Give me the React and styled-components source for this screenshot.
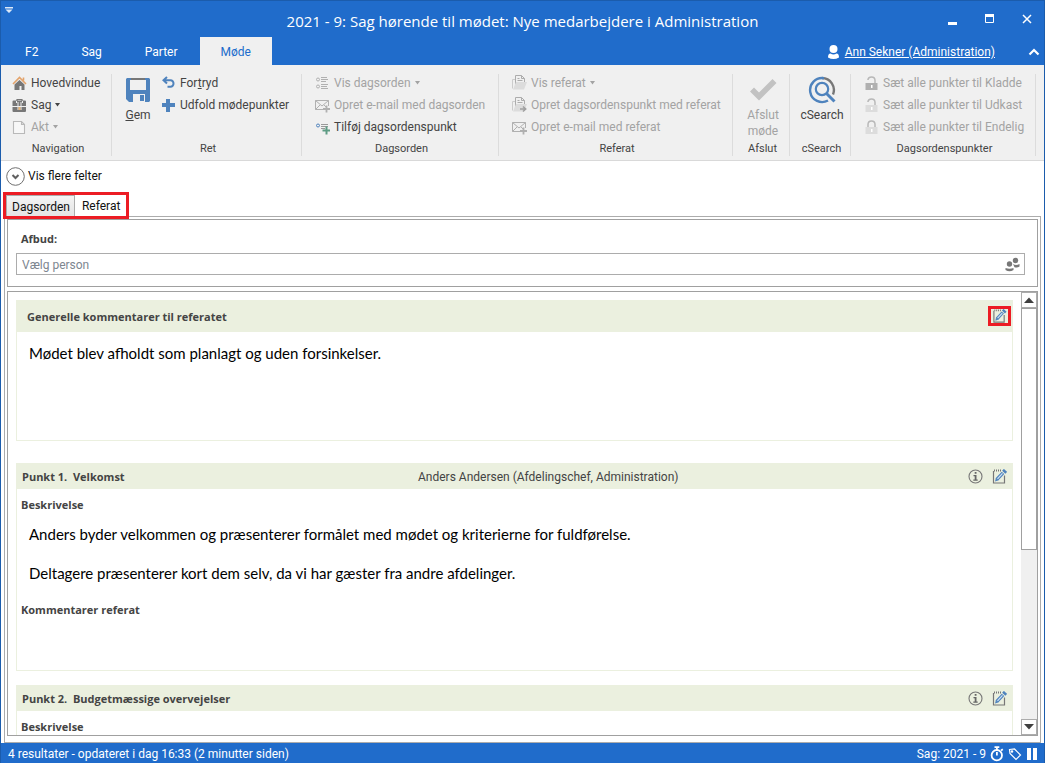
import React, { useState } from "react";
import styled, { createGlobalStyle, css } from "styled-components";

const BLUE = "#206ccb";
const STEEL = "#4f83bd";
const OFF = "#a3a3a3";

const App = () => {
  const [person, setPerson] = useState("");

  return (
    <>
      <GlobalStyle />
      <Window>
        <TitleBar>
          <QuickMenu aria-label="Hurtigmenu">
            <QuickIcon />
          </QuickMenu>
          <Title>2021 - 9: Sag hørende til mødet: Nye medarbejdere i Administration</Title>
          <WindowButtons>
            <WindowButton aria-label="Minimer">
              <svg width="12" height="12"><path d="M1 9h9v3H1z" fill="#fff" /></svg>
            </WindowButton>
            <WindowButton aria-label="Maksimer">
              <svg width="12" height="12"><path d="M1.500 1.500h8v8h-8z" fill="none" stroke="#fff" /><path d="M1 1h9v3H1z" fill="#fff" /></svg>
            </WindowButton>
            <WindowButton aria-label="Luk">
              <svg width="12" height="12"><path d="M2 2l8 8M10 2l-8 8" stroke="#fff" strokeWidth="1.5" /></svg>
            </WindowButton>
          </WindowButtons>
        </TitleBar>

        <MenuBar>
          <MenuTab>F2</MenuTab>
          <MenuTab>Sag</MenuTab>
          <MenuTab>Parter</MenuTab>
          <MenuTab $active>Møde</MenuTab>
          <UserArea>
            <svg width="11" height="15" viewBox="0 0 11 15"><ellipse cx="5.5" cy="4" rx="4" ry="4" fill="#fff" /><path d="M0 12.500Q0 8.500 2.500 8.500Q5.500 10.500 8.500 8.500Q11 8.500 11 12.500Q5.500 15.500 0 12.500z" fill="#fff" /></svg>
            <UserLink href="#user">Ann Sekner (Administration)</UserLink>
            <CollapseButton aria-label="Skjul bånd">
              <svg width="12" height="8"><path d="M1.500 6.500l4.500-4.500 4.500 4.500" fill="none" stroke="#fff" strokeWidth="2.200" /></svg>
            </CollapseButton>
          </UserArea>
        </MenuBar>

        <Ribbon>
          <Group $width={110}>
            <Commands $pad={10}>
              <Command><HomeIcon />Hovedvindue</Command>
              <Command><BriefcaseIcon />Sag<Arrow /></Command>
              <Command disabled><FileIcon />Akt<Arrow /></Command>
            </Commands>
            <GroupLabel>Navigation</GroupLabel>
          </Group>
          <Group $width={190}>
            <Commands $pad={7} $row>
              <BigCommand $width={38}><SaveIcon /><span><u>G</u>em</span></BigCommand>
              <CommandColumn>
                <Command $tight><UndoIcon /><span>For<u>t</u>ryd</span></Command>
                <Command $tight><PlusIcon />Udfold mødepunkter</Command>
              </CommandColumn>
            </Commands>
            <GroupLabel>Ret</GroupLabel>
          </Group>
          <Group $width={197}>
            <Commands $pad={13}>
              <Command disabled><AgendaIcon />Vis dagsorden<Arrow /></Command>
              <Command disabled><MailIcon />Opret e-mail med dagsorden</Command>
              <Command><AddPointIcon />Tilføj dagsordenspunkt</Command>
            </Commands>
            <GroupLabel>Dagsorden</GroupLabel>
          </Group>
          <Group $width={234}>
            <Commands $pad={13}>
              <Command disabled><FolderIcon />Vis referat<Arrow /></Command>
              <Command disabled><FolderIcon arrow />Opret dagsordenspunkt med referat</Command>
              <Command disabled><MailIcon />Opret e-mail med referat</Command>
            </Commands>
            <GroupLabel>Referat</GroupLabel>
          </Group>
          <Group $width={57}>
            <Commands $pad={4} $row>
              <BigCommand $width={54} disabled><CheckIcon /><span>Afslut<br />møde</span></BigCommand>
            </Commands>
            <GroupLabel>Afslut</GroupLabel>
          </Group>
          <Group $width={61}>
            <Commands $pad={4} $row>
              <BigCommand $width={56}><SearchIcon />cSearch</BigCommand>
            </Commands>
            <GroupLabel>cSearch</GroupLabel>
          </Group>
          <Group $width={185}>
            <Commands $pad={13}>
              <Command disabled><LockIcon tone="#b0b0b0" open />Sæt alle punkter til Kladde</Command>
              <Command disabled><LockIcon tone="#dcdcdc" open />Sæt alle punkter til Udkast</Command>
              <Command disabled><LockIcon tone="#dcdcdc" />Sæt alle punkter til Endelig</Command>
            </Commands>
            <GroupLabel>Dagsordenspunkter</GroupLabel>
          </Group>
        </Ribbon>

        <Content>
          <MoreFields>
            <svg width="19" height="19" viewBox="0 0 19 19"><circle cx="9.500" cy="9.500" r="8.800" fill="#fff" stroke="#707070" /><path d="M6.500 8l3 3 3-3" fill="none" stroke="#606060" strokeWidth="2" /></svg>
            Vis flere felter
          </MoreFields>
          <TabStrip>
            <PageTab>Dagsorden</PageTab>
            <PageTab $active>Referat</PageTab>
          </TabStrip>
          <TabBody>
            <AbsencePanel>
              <FieldLabel htmlFor="person">Afbud:</FieldLabel>
              <PersonField>
                <PersonInput id="person" placeholder="Vælg person" value={person} onChange={(e) => setPerson(e.target.value)} />
                <IconButton aria-label="Vælg deltagere"><PeopleIcon /></IconButton>
              </PersonField>
            </AbsencePanel>
            <MinutesPanel>
              <MinutesList>
                <Card $height={141} $after={22}>
                  <CardHeader $large>
                    <CardTitle>Generelle kommentarer til referatet</CardTitle>
                    <CardActions $flush>
                      <IconButton $marked aria-label="Rediger"><EditIcon /></IconButton>
                    </CardActions>
                  </CardHeader>
                  <Paragraph>Mødet blev afholdt som planlagt og uden forsinkelser.</Paragraph>
                </Card>
                <Card $height={208} $after={14}>
                  <PointHeader title="Punkt 1.&nbsp; Velkomst" owner="Anders Andersen (Afdelingschef, Administration)" />
                  <SubTitle>Beskrivelse</SubTitle>
                  <Paragraph>Anders byder velkommen og præsenterer formålet med mødet og kriterierne for fuldførelse.</Paragraph>
                  <Paragraph>Deltagere præsenterer kort dem selv, da vi har gæster fra andre afdelinger.</Paragraph>
                  <SubTitle>Kommentarer referat</SubTitle>
                </Card>
                <Card $height={208} $after={14}>
                  <PointHeader title="Punkt 2.&nbsp; Budgetmæssige overvejelser" />
                  <SubTitle>Beskrivelse</SubTitle>
                </Card>
              </MinutesList>
              <ScrollBar>
                <ScrollButton aria-label="Rul op"><svg width="10" height="6"><path d="M0 6l5-5.500 5 5.500z" fill="#404040" /></svg></ScrollButton>
                <ScrollTrack><ScrollThumb /></ScrollTrack>
                <ScrollButton aria-label="Rul ned"><svg width="10" height="6"><path d="M0 0h10l-5 5.500z" fill="#404040" /></svg></ScrollButton>
              </ScrollBar>
            </MinutesPanel>
          </TabBody>
        </Content>

        <StatusBar>
          <span>4 resultater - opdateret i dag 16:33 (2 minutter siden)</span>
          <StatusRight>
            <span>Sag: 2021 - 9</span>
            <svg width="14" height="16" viewBox="0 0 14 16" fill="none" stroke="#fff" strokeWidth="1.800"><circle cx="6.800" cy="9.200" r="5.200" /><path d="M4.500 1.200h4.800M6.900 1v3M6.900 6v3.500M11 4.500l1.800-1.300" /></svg>
            <svg width="14" height="14" viewBox="0 0 14 14" fill="none" stroke="#fff" strokeWidth="1.200"><path d="M1.500 2.500l5-.5 6 6-4.500 4.500-6-6z" /><circle cx="4" cy="4.500" r=".7" /></svg>
            <svg width="12" height="14"><path d="M1 1h4v12H1zM7 1h4v12H7z" fill="#fff" /></svg>
          </StatusRight>
        </StatusBar>
      </Window>
    </>
  );
};

const PointHeader = ({ title, owner }) => (
  <CardHeader>
    <CardTitle>{title}</CardTitle>
    <Owner>{owner}</Owner>
    <CardActions>
      <IconButton aria-label="Information"><InfoIcon /></IconButton>
      <IconButton aria-label="Rediger"><EditIcon /></IconButton>
    </CardActions>
  </CardHeader>
);

/* icons */
const QuickIcon = () => (
  <svg width="8" height="6"><path d="M0 0h8v1.500H0zM0.500 2.500h7L4 6z" fill="#dbe8f8" /></svg>
);

const Arrow = () => (
  <svg width="5" height="4"><path d="M0 0h5l-2.500 3.500z" fill="currentColor" /></svg>
);

const HomeIcon = () => (
  <svg width="15" height="15" viewBox="0 0 15 15">
    <path d="M2.500 8.500l5-4.500 5 4.500V14H9.500v-4h-2v4h-5z" fill="#777" />
    <path d="M1 8l6.500-6.500L14 8M11.500 1.500v3" fill="none" stroke="#e3a36b" strokeWidth="1.600" />
  </svg>
);

const BriefcaseIcon = () => (
  <svg width="15" height="15" viewBox="0 0 15 15">
    <path d="M5 3V1.500h5V3" fill="none" stroke="#777" strokeWidth="1.200" />
    <path d="M2 2.500h11a1 1 0 0 1 1 1V8H.5V3.500a1 1 0 0 1 1-1zM.5 9H14v4a1 1 0 0 1-1 1H1.500a1 1 0 0 1-1-1z" fill="#777" />
    <path d="M4.500 3v2M10.500 3v2" stroke="#f0f0f0" />
    <path d="M6 4v8M9 4v8" stroke="#eee" /><rect x="6.500" y="9" width="2" height="3" fill="#e8b475" />
  </svg>
);

const FileIcon = () => (
  <svg width="15" height="15" viewBox="0 0 15 15"><path d="M1.500 1.500h8l3 3v9h-11zM9.500 1.500v3h3" fill="#f7f7f7" stroke="#b9b9b9" strokeWidth="1.100" /></svg>
);

const SaveIcon = () => (
  <svg width="24" height="24" viewBox="0 0 24 24">
    <path d="M1 0h22l1 1v22l-1 1H3l-3-3V1z" fill={STEEL} />
    <path d="M4 2h16v10H4z" fill="#f0f0f0" /><path d="M5 0h14v2H5z" fill="#777" />
    <path d="M7 16h12v8H7z" fill="#f0f0f0" /><path d="M14 17h4v6h-4z" fill={STEEL} />
  </svg>
);

const UndoIcon = () => (
  <svg width="15" height="15" viewBox="0 0 15 15"><path d="M6 1L2.500 4.300 6 7.600M2.500 4.300H9.500a3 3 0 0 1 3 3.200 3 3 0 0 1-3 3.200H6.500" fill="none" stroke={STEEL} strokeWidth="2" /></svg>
);

const PlusIcon = () => (
  <svg width="15" height="15"><path d="M5 1h4v4h5v4H9v5H5V9H1V5h4z" fill={STEEL} /></svg>
);

const AgendaIcon = () => (
  <svg width="15" height="15" viewBox="0 0 15 15" fill="none" stroke="#b0b0b0"><circle cx="3" cy="3.500" r="1.500" /><circle cx="3" cy="10.500" r="1.500" /><path d="M6 1.500h6M6 3.500h7M6 5.500h5M6 8.500h7M6 10.500h6M6 12.500h7" /></svg>
);

const MailIcon = () => (
  <svg width="15" height="15" viewBox="0 0 15 15" fill="none" stroke="#b0b0b0">
    <path d="M13.500 8V2.500H.5v9h8M.5 2.500L7 8l6.500-5.500M.5 11.500L5 7M9 7l2 2" /><path d="M11.500 7.500v7M8 11h7" strokeWidth="1.800" />
  </svg>
);

const AddPointIcon = () => (
  <svg width="15" height="15" viewBox="0 0 15 15" fill="none">
    <circle cx="3" cy="5.500" r="1.500" stroke={STEEL} /><path d="M6 4.500h7M6 6.500h7M6 8.500h4" stroke="#999" />
    <path d="M11.500 6.500v8M7.500 10.500h7.500" stroke="#5e9c84" strokeWidth="2" />
  </svg>
);

const FolderIcon = ({ arrow }) => (
  <svg width="15" height="16" viewBox="0 0 15 16">
    <path d="M.5 13.500v-9h3" fill="none" stroke="#ccc" /><path d="M3.500 10V.5h6l3 3V8M9.500.5v3h3M5.500 3.500h2M5.500 5.500h5" fill="none" stroke="#acacac" />
    <path d="M1 14.500L4 7h11l-3 7.500z" fill="#dcdcdc" />
    {arrow && <path d="M8 12h5M11 9.500l2.700 2.500-2.700 2.500" stroke="#a0a0a0" strokeWidth="1.600" fill="none" />}
  </svg>
);

const CheckIcon = () => (
  <svg width="28" height="24" viewBox="0 0 28 24"><path d="M1 13.500L5 9.500l5 5L23.500 1l4 4L10 22.500z" fill="#c2c2c2" /></svg>
);

const SearchIcon = () => (
  <svg width="28" height="28" viewBox="0 0 28 28" fill="none">
    <path d="M25 18.500A12 12 0 0 0 14 2" stroke="#777" strokeWidth="2.400" /><path d="M16 2.200A12 12 0 1 0 20 24.500" stroke={STEEL} strokeWidth="2.400" />
    <circle cx="14" cy="13" r="6.200" stroke={STEEL} strokeWidth="2.200" /><path d="M18.500 17.500l8 8" stroke={STEEL} strokeWidth="3" />
  </svg>
);

const LockIcon = ({ tone, open }) => (
  <svg width="15" height="15" viewBox="0 0 15 15">
    <path d={open ? "M4 4V3.500Q4.500 1 7.500 1Q11 1 11 4.500V7" : "M4 7V4.500Q4 1 7.500 1Q11 1 11 4.500V7"} fill="none" stroke="#b8b8b8" strokeWidth="1.500" />
    <rect x="1.500" y="7" width="12" height="7" fill={tone} /><path d="M7 9h1.500v3H7z" fill="#fff" />
  </svg>
);

const PeopleIcon = () => (
  <svg width="15" height="15" viewBox="0 0 15 15" fill="#777"><circle cx="10.500" cy="3.500" r="2.700" /><path d="M8 7q3 1.800 6.500 0v2.500q-2 1.500-5 .8z" /><circle cx="4.500" cy="7" r="2.700" /><path d="M.5 11q4 1.600 8 0v2q-4 2.500-8 0z" /></svg>
);

const InfoIcon = () => (
  <svg width="15" height="15" viewBox="0 0 15 15"><circle cx="7.500" cy="7.500" r="6.500" fill="none" stroke="#777" strokeWidth="1.100" /><path d="M6.700 3h1.800v1.700H6.700zM5.500 6h3v4.500h1.200v1.200H5.300v-1.200h1.400V7.200H5.500z" fill="#666" /></svg>
);

const EditIcon = () => (
  <svg width="15" height="15" viewBox="0 0 15 15" fill="none">
    <path d="M2 2.500H1.500v11.500h11V6.500" stroke="#777" strokeWidth="1.200" /><path d="M2 1.500h8" stroke="#777" strokeWidth="2" strokeDasharray="1 1" />
    <path d="M4.800 10.500L11 3.800" stroke={STEEL} strokeWidth="3.400" /><path d="M5.500 9.800l5-5.500" stroke="#cfe2f5" strokeWidth="1.200" /><path d="M11 .8l3.200 3" stroke={STEEL} strokeWidth="2.500" /><path d="M3 12.500l.8-3.300 2.300 2.200z" fill={STEEL} />
  </svg>
);

const GlobalStyle = createGlobalStyle`
  * {
    box-sizing: border-box;
  }
  body {
    margin: 0;
    font: 12px/16px Roboto, "Open Sans", sans-serif;
    color: #444;
  }
  button, input {
    font: inherit;
    color: inherit;
  }
  button {
    margin: 0;
    padding: 0;
    border: 0;
    background: none;
  }
  svg {
    display: block;
    flex: none;
  }
`;

const heading = css`
  font: 700 11px/16px "Open Sans", sans-serif;
`;

const Window = styled.div`
  display: flex;
  flex-direction: column;
  height: 100vh;
  border: 1px solid #1b5cac;
  border-bottom: 0;
  background: #fff;
  overflow: hidden;
`;

const TitleBar = styled.header`
  display: grid;
  grid-template-columns: 120px 1fr 120px;
  height: 36px;
  background: ${BLUE};
  color: #fff;
`;

const QuickMenu = styled.button`
  align-self: start;
  justify-self: start;
  padding: 6px 4px;
`;

const Title = styled.h1`
  margin: 0;
  padding-top: 10px;
  font: 15px/20px "Open Sans", sans-serif;
  text-align: center;
  white-space: nowrap;
`;

const WindowButtons = styled.div`
  display: flex;
  justify-content: flex-end;
  align-items: center;
  gap: 25px;
  padding-right: 11px;
`;

const WindowButton = styled.button`
  width: 12px;
`;

const MenuBar = styled.nav`
  display: flex;
  height: 28px;
  gap: 1px;
  padding-left: 3px;
  background: ${BLUE};
`;

const MenuTab = styled.button`
  padding: 2px 21px 0;
  color: #fff;
  ${({ $active }) => $active && css`
    color: ${BLUE};
    background: #f0f0f0;
  `}
`;

const UserArea = styled.div`
  display: flex;
  align-items: center;
  margin-left: auto;
  padding: 2px 4px 0 0;
`;

const UserLink = styled.a`
  margin: 0 33px 0 6px;
  color: #fff;
`;

const CollapseButton = styled.button``;

const Ribbon = styled.div`
  display: flex;
  flex: none;
  height: 96px;
  padding: 9px 1px 4px;
  background: #f0f0f0;
  border-bottom: 1px solid #d9d9d9;
`;

const Group = styled.section`
  display: flex;
  flex-direction: column;
  flex: none;
  width: ${({ $width }) => $width}px;
  border-right: 1px solid #dcdcdc;
`;

const Commands = styled.div`
  display: flex;
  flex: 1;
  flex-direction: ${({ $row }) => ($row ? "row" : "column")};
  margin-top: -2px;
  padding-left: ${({ $pad }) => $pad}px;
`;

const CommandColumn = styled.div`
  display: flex;
  flex-direction: column;
`;

const Command = styled.button`
  display: flex;
  align-items: center;
  gap: 4px;
  height: 22px;
  padding-left: ${({ $tight }) => ($tight ? "4px" : "0")};
  white-space: nowrap;
  &:disabled {
    color: ${OFF};
  }
`;

const BigCommand = styled.button`
  display: flex;
  flex-direction: column;
  align-items: center;
  gap: 3px;
  width: ${({ $width }) => $width}px;
  padding-top: 4px;
  svg {
    height: 28px;
  }
  &:disabled {
    color: ${OFF};
  }
`;

const GroupLabel = styled.div`
  padding-left: 3px;
  font-size: 11px;
  line-height: 14px;
  text-align: center;
`;

const Content = styled.main`
  display: flex;
  flex-direction: column;
  flex: 1;
  min-height: 0;
  padding: 5px 3px 0;
`;

const MoreFields = styled.button`
  display: flex;
  align-items: center;
  align-self: flex-start;
  gap: 3px;
  height: 20px;
  padding-left: 2px;
  color: #111;
`;

const TabStrip = styled.div`
  position: relative;
  z-index: 1;
  display: flex;
  align-self: flex-start;
  height: 27px;
  margin: 6px 0 -3px -1px;
  border: 3px solid #ec1c24;
  background: #fff;
`;

const PageTab = styled.button`
  padding: 2px 4px 0 5px;
  color: #111;
  background: linear-gradient(#f4f4f4, #e4e4e4);
  border: 1px solid #acacac;
  border-bottom: 0;
  ${({ $active }) => $active && css`
    padding: 0 6px 0 7px;
    background: #fff;
    border: 0;
  `}
`;

const TabBody = styled.div`
  display: flex;
  flex-direction: column;
  flex: 1;
  gap: 4px;
  min-height: 0;
  padding: 2px 2px 6px;
  border: 1px solid #acacac;
`;

const AbsencePanel = styled.section`
  flex: none;
  height: 68px;
  padding: 11px 12px 0 8px;
  border: 1px solid #a0a0a0;
`;

const FieldLabel = styled.label`
  ${heading}
  display: block;
  padding-left: 5px;
`;

const PersonField = styled.div`
  display: flex;
  align-items: center;
  height: 22px;
  margin-top: 6px;
  padding-right: 4px;
  border: 1px solid #acacac;
`;

const PersonInput = styled.input`
  flex: 1;
  padding: 2px 5px 0;
  border: 0;
  outline: 0;
  &::placeholder {
    color: #7d8690;
  }
`;

const IconButton = styled.button`
  ${({ $marked }) => $marked && css`
    padding: 0 1px;
    border: 3px solid #ec1c24;
    svg {
      height: 14px;
    }
  `}
`;

const MinutesPanel = styled.section`
  display: flex;
  flex: 1;
  min-height: 0;
  border: 1px solid #a0a0a0;
`;

const MinutesList = styled.div`
  flex: 1;
  overflow: hidden;
  padding: 8px 8px 0;
`;

const Card = styled.article`
  height: ${({ $height }) => $height}px;
  margin-bottom: ${({ $after }) => $after}px;
  border: 1px solid #ebf0df;
  border-top: 0;
`;

const CardHeader = styled.header`
  display: grid;
  grid-template-columns: 40% 1fr auto;
  align-items: center;
  height: ${({ $large }) => ($large ? "32px" : "26px")};
  padding-left: ${({ $large }) => ($large ? "10px" : "5px")};
  background: #ebf0df;
`;

const CardTitle = styled.h2`
  ${heading}
  margin: 0;
  padding-top: 2px;
  white-space: nowrap;
`;

const Owner = styled.span`
  padding-top: 2px;
`;

const CardActions = styled.div`
  display: flex;
  grid-column: 3;
  gap: 9px;
  padding-right: ${({ $flush }) => ($flush ? "1px" : "5px")};
`;

const Paragraph = styled.p`
  margin: 11px 12px 0;
  font: 15px/20px Lato, sans-serif;
  color: #000;
  & + & {
    margin-top: 19px;
  }
`;

const SubTitle = styled.h3`
  ${heading}
  margin: 8px 0 0 4px;
  ${Paragraph} + & {
    margin-top: 19px;
  }
`;

const ScrollBar = styled.div`
  display: flex;
  flex-direction: column;
  width: 16px;
  background: #f0f0f0;
`;

const ScrollButton = styled.button`
  display: grid;
  place-items: center;
  height: 16px;
  border: 1px solid #acacac;
  background: #fff;
`;

const ScrollTrack = styled.div`
  flex: 1;
`;

const ScrollThumb = styled.div`
  height: 59%;
  border: 1px solid #a0a0a0;
  background: #fff;
`;

const StatusBar = styled.footer`
  display: flex;
  flex: none;
  justify-content: space-between;
  align-items: center;
  height: 20px;
  padding: 1px 6px 0 7px;
  background: ${BLUE};
  color: #fff;
`;

const StatusRight = styled.div`
  display: flex;
  align-items: center;
  gap: 4px;
`;

export default App;
